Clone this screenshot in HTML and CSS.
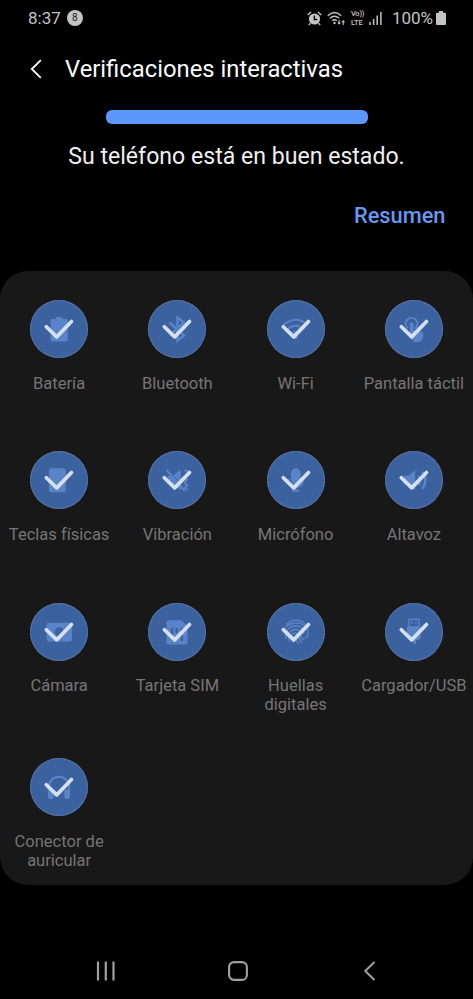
FILE: index.html
```html
<!DOCTYPE html>
<html lang="es">
<head>
<meta charset="utf-8">
<title>Verificaciones interactivas</title>
<link rel="stylesheet" href="styles.css">
</head>
<body>
<svg class="defs" width="0" height="0" aria-hidden="true">
  <symbol id="check" viewBox="0 0 58 58"><path d="M16.3 26.7 26.7 36.9 41.5 21.5" fill="none" stroke="#d4e0ee" stroke-width="3.7" stroke-linecap="round" stroke-linejoin="round"/></symbol>
</svg>
<div class="screen">
  <header class="status">
    <span class="clock">8:37</span>
    <span class="badge">8</span>
    <div class="status-icons">
      <svg class="alarm" width="15" height="15" viewBox="0 0 15 15"><circle cx="7.5" cy="8" r="5.6" fill="currentColor"/><path d="M.8 4 4 1M14.2 4 11 1M3.4 12.3 1.8 14M11.6 12.3l1.6 1.7" stroke="currentColor" stroke-width="1.4"/><path d="M7.3 4.6v3.9h2.9" fill="none" stroke="#000" stroke-width="1.3"/></svg>
      <svg class="wifi" width="19" height="15" viewBox="0 0 19 15" fill="none" stroke="currentColor" stroke-width="1.5"><path d="M.8 4.7q6.7-6.5 13.4 0M3 7.3q4.5-4.2 9 0M5.2 9.8q2.3-2 4.6 0"/><circle cx="7.5" cy="12" r="1.2" fill="currentColor" stroke="none"/><path d="M12.1 9v4M16.2 14v-4" stroke-width="1.1"/><path d="m10.2 11.5 1.9 2.3 1.9-2.3zM14.3 11.3l1.9-2.4 1.9 2.4z" fill="currentColor" stroke="none"/></svg>
      <span class="volte"><span class="vo">Vo))</span><span>LTE</span></span>
      <svg class="signal" width="13" height="14" viewBox="0 0 13 14"><path d="M1 11v3M4.6 8v6M8.2 4.5V14M11.9 1v13" stroke="currentColor" stroke-width="1.5"/></svg>
      <span class="percent">100%</span>
      <svg class="cell" width="10" height="14" viewBox="0 0 10 14"><path d="M3 0h4v1.7h2q1 0 1 1V13q0 1-1 1H1q-1 0-1-1V2.7q0-1 1-1h2z" fill="currentColor"/></svg>
    </div>
  </header>

  <div class="titlebar">
    <svg width="12" height="20" viewBox="0 0 12 20"><path d="M10.8 1.2 1.8 10l9 8.8" fill="none" stroke="#fff" stroke-width="1.8"/></svg>
    <h1>Verificaciones interactivas</h1>
  </div>

  <section class="summary">
    <div class="progress"></div>
    <p>Su teléfono está en buen estado.</p>
    <a class="resumen">Resumen</a>
  </section>

  <main class="panel">
    <div class="item"><svg class="disc" viewBox="0 0 58 58"><path class="fill" d="M25.7 17h6.6v2h4q1.4 0 1.4 1.4v19.7q0 1.4-1.4 1.4H22.1q-1.4 0-1.4-1.4V20.4q0-1.4 1.4-1.4h3.6z"/><use href="#check"/></svg><span>Batería</span></div>
    <div class="item"><svg class="disc" viewBox="0 0 58 58"><path class="line thick" d="m21.5 22.5 14.5 13-6.5 5V17.5l6.5 5-14.5 13"/><use href="#check"/></svg><span>Bluetooth</span></div>
    <div class="item"><svg class="disc" viewBox="0 0 58 58"><path class="line" d="M16.5 25q12.3-10.5 24.6 0M20.5 29.2q8.3-7 16.6 0M24.3 33.3q4.5-3.3 9 0"/><circle class="fill" cx="28.7" cy="37" r="2.2"/><use href="#check"/></svg><span>Wi-Fi</span></div>
    <div class="item"><svg class="disc" viewBox="0 0 58 58"><path class="line" d="M23 28.7a6 6 0 1 1 7 0"/><path class="fill" d="M24.8 24.5a1.9 1.9 0 0 1 3.8 0V30l6.4 1.3q3.5.8 3.3 4.2c-.2 4-2.5 6.7-6.3 6.7-3.7 0-5.5-2.7-7.2-5.7z"/><use href="#check"/></svg><span>Pantalla táctil</span></div>

    <div class="item"><svg class="disc" viewBox="0 0 58 58"><rect class="fill" x="19" y="17.3" width="16.8" height="24" rx="2.4"/><path class="fill" d="M36.3 23h.9v5h-.9z"/><use href="#check"/></svg><span>Teclas físicas</span></div>
    <div class="item"><svg class="disc" viewBox="0 0 58 58"><path class="fill" d="m25 24.5 7.7-6v13zM19.5 25h3l10.2 10.5v3.8L25.5 33h-6z"/><path class="line" d="m18.5 19 18.5 21M36.5 20q3.5-1.5 3 1.7M36 25.5l3 3-2.5 3 2.7 3-2 2.3 2.2 2.4"/><use href="#check"/></svg><span>Vibración</span></div>
    <div class="item"><svg class="disc" viewBox="0 0 58 58"><rect class="fill" x="24" y="17.3" width="9.6" height="16" rx="4.8"/><path class="line" d="M21.5 28v1a7.3 7.3 0 0 0 14.6 0V28M28.8 36v3M25 39.7h7.6"/><use href="#check"/></svg><span>Micrófono</span></div>
    <div class="item"><svg class="disc" viewBox="0 0 58 58"><path class="fill" d="M18.7 24.7h4.8l6.7-5.4v19.8l-6.7-5.5h-4.8z"/><path class="line thick" d="M33.5 24.5q3.3 4.7 0 9.5M37.2 20.7q6.5 8.5 0 17"/><use href="#check"/></svg><span>Altavoz</span></div>

    <div class="item"><svg class="disc" viewBox="0 0 58 58"><path class="fill" fill-rule="evenodd" d="M18.5 19.8h21.7q1.8 0 1.8 1.8v15q0 1.8-1.8 1.8H18.5q-1.8 0-1.8-1.8v-15q0-1.8 1.8-1.8zM29.3 24.3a4.5 4.5 0 1 0 0 9 4.5 4.5 0 0 0 0-9z"/><use href="#check"/></svg><span>Cámara</span></div>
    <div class="item"><svg class="disc" viewBox="0 0 58 58"><path class="fill" d="M20.5 17.3h13l6 5.7v16.4q0 2-2 2h-17q-2 0-2-2V19.3q0-2 2-2z"/><path class="chip" d="M24 26v5M28.7 26v3M33.5 26v4M34 33.5V37"/><use href="#check"/></svg><span>Tarjeta SIM</span></div>
    <div class="item"><svg class="disc" viewBox="0 0 58 58"><path class="line thin" d="M19.5 21.5c5-5.7 14-5.7 18.8 0M17 29c.5-12 23.5-12.5 24 1 0 2.5-1 4.3-3 4.3M19 36c-1-4.5 0-13 9.8-13 6 0 8.4 4.5 8 8M22.5 38.5c-3-7-.2-12 6.3-12 4 0 5.3 3 5.2 5.5 0 4.3 2.5 4.5 3.5 4.5M26.5 40c-3.5-6-2.5-10 2.2-10 4 0 1.5 6.7 6.5 9.5M28.8 33q0 5 3 8"/><use href="#check"/></svg><span>Huellas digitales</span></div>
    <div class="item"><svg class="disc" viewBox="0 0 58 58"><path class="line thin" d="M24 23.5v-7h10v7"/><path class="line thin" d="M26.3 19.8h2M30 19.8h2"/><path class="fill" d="M22 23.3h13.7V33q0 4-4 4H31v4h-2.5v-4H26q-4 0-4-4z"/><use href="#check"/></svg><span>Cargador/USB</span></div>

    <div class="item"><svg class="disc" viewBox="0 0 58 58"><path class="line" d="M18.8 34v-5a10.2 10.2 0 0 1 20.4 0v5"/><rect class="fill" x="18" y="31" width="5.7" height="10" rx="2"/><rect class="fill" x="34.3" y="31" width="5.7" height="10" rx="2"/><use href="#check"/></svg><span>Conector de auricular</span></div>
  </main>

  <nav class="navbar">
    <svg width="20" height="20" viewBox="0 0 20 20"><path d="M2 .5v19M9.8.5v19M17.5.5v19" stroke="currentColor" stroke-width="2.2"/></svg>
    <svg width="20" height="20" viewBox="0 0 20 20"><rect x="1.1" y="1.1" width="17.8" height="17.8" rx="5" fill="none" stroke="currentColor" stroke-width="2.1"/></svg>
    <svg width="20" height="20" viewBox="0 0 20 20"><path d="M14.5 1 5.3 10l9.2 9" fill="none" stroke="currentColor" stroke-width="2"/></svg>
  </nav>
</div>
</body>
</html>
```
FILE: styles.css
```css
* { box-sizing: border-box; }
body { margin: 0; background: #000; font-family: Roboto, sans-serif; }
.defs { display: block; }
.screen { width: 473px; height: 999px; display: flex; flex-direction: column; overflow: hidden; background: #000; }

.status { height: 36px; padding: 0 27px 0 28px; display: flex; align-items: center; color: #c4c4c4; }
.clock { font-size: 17px; }
.badge { width: 16px; height: 16px; margin-left: 6px; border-radius: 50%; background: #c4c4c4; color: #222; font-size: 10px; line-height: 16px; text-align: center; }
.status-icons { margin-left: auto; display: flex; align-items: center; }
.wifi { margin-left: 5px; }
.volte { width: 15px; margin-left: 5px; display: flex; flex-direction: column; font-size: 7.5px; line-height: 9px; font-weight: 500; white-space: nowrap; }
.vo { letter-spacing: -.2px; }
.signal { margin-left: 3px; }
.percent { margin-left: 10px; font-size: 17px; }
.cell { margin-left: 3px; }

.titlebar { height: 66px; padding-left: 30px; display: flex; align-items: center; gap: 23px; }
h1 { margin: 0; color: #fafafa; font-size: 23.8px; font-weight: 400; line-height: 30px; white-space: nowrap; }

.summary { height: 169px; padding-top: 8px; display: flex; flex-direction: column; align-items: center; }
.progress { width: 262px; height: 14px; border-radius: 6px; background: #5c98fb; }
.summary p { margin: 18px 0 0; color: #efefef; font-size: 23.1px; line-height: 30px; white-space: nowrap; }
.resumen { align-self: flex-end; margin: 30px 27.5px 0 0; color: #6698f3; font-size: 21.8px; line-height: 28px; font-weight: 500; }

.panel { height: 614px; padding-top: 29px; border-radius: 28px; background: #181818; display: grid; grid-template-columns: repeat(4, 1fr); grid-template-rows: 151px 151.5px 155.5px 1fr; }
.item { min-width: 0; display: flex; flex-direction: column; align-items: center; color: #757575; font-size: 16.5px; line-height: 19px; text-align: center; }
.item span { max-width: 108px; margin-top: 15.5px; }
.disc { width: 58px; height: 58px; flex: none; border-radius: 50%; background: #3c619f; box-shadow: inset 0 0 0 1px #5570a0; }
.fill { fill: #5a84c8; }
.line { fill: none; stroke: #5a84c8; stroke-width: 1.9; }
.thick { stroke-width: 2.5; }
.thin { stroke-width: 1.4; }
.chip { fill: none; stroke: #3c61a8; stroke-width: 2.4; stroke-linecap: round; }

.navbar { height: 28px; margin-top: 72px; padding: 0 93px 0 96px; display: flex; align-items: center; justify-content: space-between; color: #a0a0a0; }
```
